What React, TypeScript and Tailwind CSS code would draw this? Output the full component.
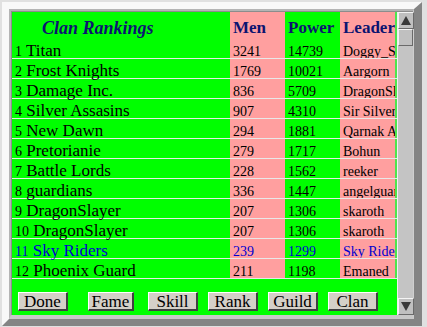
import React from 'react';

type Clan = { name: string; men: number; power: number; leader: string; own?: boolean };

const clans: Clan[] = [
  { name: 'Titan', men: 3241, power: 14739, leader: 'Doggy_Style' },
  { name: 'Frost Knights', men: 1769, power: 10021, leader: 'Aargorn' },
  { name: 'Damage Inc.', men: 836, power: 5709, leader: 'DragonSlayer' },
  { name: 'Silver Assasins', men: 907, power: 4310, leader: 'Sir Silverado' },
  { name: 'New Dawn', men: 294, power: 1881, leader: 'Qarnak Ahn' },
  { name: 'Pretorianie', men: 279, power: 1717, leader: 'Bohun' },
  { name: 'Battle Lords', men: 228, power: 1562, leader: 'reeker' },
  { name: 'guardians', men: 336, power: 1447, leader: 'angelguardian' },
  { name: 'DragonSlayer', men: 207, power: 1306, leader: 'skaroth' },
  { name: 'DragonSlayer', men: 207, power: 1306, leader: 'skaroth' },
  { name: 'Sky Riders', men: 239, power: 1299, leader: 'Sky Riders', own: true },
  { name: 'Phoenix Guard', men: 211, power: 1198, leader: 'Emaned' },
];

const buttons = [
  { label: 'Done', cls: 'ml-[6px] w-[50px]' },
  { label: 'Fame', cls: 'ml-[20px] w-[46px]' },
  { label: 'Skill', cls: 'ml-[14px] w-[50px]' },
  { label: 'Rank', cls: 'ml-[10px] w-[50px]' },
  { label: 'Guild', cls: 'ml-[10px] w-[50px]' },
  { label: 'Clan', cls: 'ml-[10px] w-[50px]' },
];

function ScrollButton({ up }: { up?: boolean }) {
  return (
    <div className="h-[17px] w-[16px] bg-[#c0c0c0] border-t border-l border-t-[#f4f4f4] border-l-[#f4f4f4] border-r border-b border-r-[#6a6a6a] border-b-[#6a6a6a] flex items-center justify-center">
      <svg width="10" height="9" viewBox="0 0 10 9">
        {up ? <polygon points="5,0 10,9 0,9" fill="#3a3a3a" /> : <polygon points="0,0 10,0 5,9" fill="#3a3a3a" />}
      </svg>
    </div>
  );
}

export default function App() {
  return (
    <div className="w-[427px] h-[327px] bg-[#e0e0e0] pt-[2px] pl-[2px] font-['Liberation_Serif',serif] text-black">
      <div className="w-[420px] h-[324px] border-solid border-t-[7px] border-l-[7px] border-r-[8px] border-b-[7px] border-t-[#f8f8f8] border-l-[#f8f8f8] border-r-[#848484] border-b-[#848484]">
        <div className="h-full border-solid border-t-2 border-l-2 border-r border-b-4 border-t-[#b4b4b4] border-l-[#b4b4b4] border-r-[#cfcfcf] border-b-[#c8c8c8]">
          <div className="h-full flex border-t border-l border-[#8c8c8c]">
            {/* table */}
            <div className="w-[385px] h-full flex flex-col bg-[#00ff00]">
              <div className="flex h-[27px] text-[18px] leading-[18px] font-bold text-[#0c1470]">
                <div className="w-[218px] pl-[30px] pt-[7px] italic">Clan Rankings</div>
                <div className="w-[55px] pl-[3px] pt-[7px] text-[17px] bg-[#ff9f9f]">Men</div>
                <div className="w-[55px] pl-[3px] pt-[7px] text-[17px]">Power</div>
                <div className="w-[55px] pl-[3px] pt-[7px] text-[17px] bg-[#ff9f9f] overflow-hidden">Leader</div>
                <div className="w-[2px] bg-[#4ee44e]" />
              </div>
              {clans.map((c, i) => (
                <div
                  key={i}
                  className={`flex h-[20px] border-b border-[#e8e8e8] text-[17px] leading-[14px] whitespace-nowrap ${
                    c.own ? 'text-[#0000d0]' : 'text-black'
                  }`}
                >
                  <div className="w-[218px] pl-[3px] pt-[5px]">
                    <span className="text-[14px]">{i + 1}</span> {c.name}
                  </div>
                  <div className="w-[55px] pl-[3px] pt-[5px] bg-[#ff9f9f]">
                    <span className="text-[14px]">{c.men}</span>
                  </div>
                  <div className="w-[55px] pl-[3px] pt-[5px]">
                    <span className="text-[14px]">{c.power}</span>
                  </div>
                  <div className="w-[55px] pl-[3px] pt-[5px] bg-[#ff9f9f] overflow-hidden">
                    <span className="text-[14px]">{c.leader}</span>
                  </div>
                  <div className="w-[2px] bg-[#4ee44e]" />
                </div>
              ))}
              <div className="flex pt-[13px]">
                {buttons.map((b) => (
                  <button
                    key={b.label}
                    className={`${b.cls} h-[19px] bg-[#d4d0c8] border-t border-l border-t-white border-l-white border-r-2 border-b-2 border-r-[#404040] border-b-[#404040] text-[17px] leading-[15px] text-black flex items-center justify-center`}
                  >
                    {b.label}
                  </button>
                ))}
              </div>
            </div>
            {/* scrollbar */}
            <div className="w-[16px] h-full flex flex-col bg-[#c4c4c4] border-l border-[#f0f0f0]">
              <ScrollButton up />
              <div className="h-[17px] bg-[#c0c0c0] border-t border-l border-t-[#f4f4f4] border-l-[#f4f4f4] border-r border-b border-r-[#6a6a6a] border-b-[#6a6a6a]" />
              <div className="flex-1" />
              <ScrollButton />
            </div>
          </div>
        </div>
      </div>
    </div>
  );
}
